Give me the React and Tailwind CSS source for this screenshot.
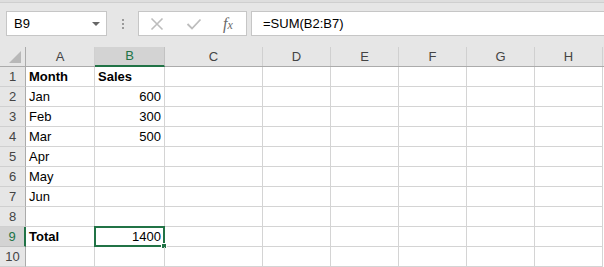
import React from 'react'

const cols = [
  { id: 'A', w: 'w-[69px]' },
  { id: 'B', w: 'w-[70px]' },
  { id: 'C', w: 'w-[98px]' },
  { id: 'D', w: 'w-[68px]' },
  { id: 'E', w: 'w-[68px]' },
  { id: 'F', w: 'w-[68px]' },
  { id: 'G', w: 'w-[68px]' },
  { id: 'H', w: 'w-[68px]' },
]

const rows = [
  ['Month', 'Sales', true],
  ['Jan', '600'],
  ['Feb', '300'],
  ['Mar', '500'],
  ['Apr', ''],
  ['May', ''],
  ['Jun', ''],
  ['', ''],
  ['Total', '1400', true],
  ['', ''],
]

function FormulaBar() {
  return (
    <div className="flex items-stretch h-[25px] mt-[8px]">
      <div className="ml-[6px] w-[101px] bg-white border border-[#c6c6c6] flex items-center justify-between pl-[7px] pr-[6px] text-[13px] text-black">
        <span>B9</span>
        <span className="w-0 h-0 border-l-[4px] border-r-[4px] border-t-[4px] border-l-transparent border-r-transparent border-t-[#666]" />
      </div>
      <div className="w-[31px] flex flex-col items-center justify-center gap-[2px]">
        <span className="w-[2px] h-[2px] bg-[#9a9a9a]" />
        <span className="w-[2px] h-[2px] bg-[#9a9a9a]" />
        <span className="w-[2px] h-[2px] bg-[#9a9a9a]" />
      </div>
      <div className="w-[109px] bg-white border border-[#c6c6c6] flex items-center">
        <svg width="14" height="14" viewBox="0 0 14 14" className="ml-[11px]">
          <path d="M1.5 1.5 L12.5 12.5 M12.5 1.5 L1.5 12.5" stroke="#bdbdbd" strokeWidth="1.6" fill="none" />
        </svg>
        <svg width="16" height="12" viewBox="0 0 16 12" className="ml-[22px]">
          <path d="M1.5 6 L6 10.5 L14.5 1.5" stroke="#bdbdbd" strokeWidth="1.8" fill="none" />
        </svg>
        <span className="ml-[21px] font-['Liberation_Serif',serif] italic text-[16px] text-[#6a6a6a] leading-none">
          f<span className="text-[12px]">x</span>
        </span>
      </div>
      <div className="ml-[4px] flex-1 bg-white border border-[#c6c6c6] border-r-0 flex items-center pl-[11px] text-[13px] text-black">
        =SUM(B2:B7)
      </div>
    </div>
  )
}

export default function App() {
  return (
    <div className="w-[604px] h-[267px] overflow-hidden bg-[#e6e6e6] font-['Liberation_Sans',Arial,sans-serif]">
      <div className="h-[3px] bg-[#dedede] border-b border-[#cfcfcf]" />
      <FormulaBar />
      <div className="mt-[11px]">
        <div className="flex h-[20px] border-b border-[#ababab]">
          <div className="w-[26px] border-r border-[#ababab] relative">
            <svg width="12" height="12" viewBox="0 0 12 12" className="absolute right-[4px] bottom-[3px]">
              <path d="M12 0 L12 12 L0 12 Z" fill="#b8b8b8" />
            </svg>
          </div>
          {cols.map((c) => (
            <div
              key={c.id}
              className={`${c.w} flex items-center justify-center text-[13px] border-r ${
                c.id === 'B'
                  ? 'bg-[#d3d3d3] text-[#217346] border-r-[#c2c2c2] border-b-2 border-b-[#217346] -mb-px'
                  : 'text-[#444] border-[#d0d0d0]'
              }`}
            >
              {c.id}
            </div>
          ))}
        </div>
        <div className="bg-white">
          {rows.map((r, i) => {
            const sel = i === 8
            return (
              <div key={i} className="flex h-[20px]">
                <div
                  className={`w-[26px] flex items-center justify-center text-[13px] border-b ${
                    sel
                      ? 'bg-[#d3d3d3] text-[#217346] border-b-[#c2c2c2] border-r-2 border-r-[#217346]'
                      : 'bg-[#e6e6e6] text-[#444] border-b-[#d0d0d0] border-r border-r-[#ababab]'
                  }`}
                >
                  {i + 1}
                </div>
                <div className={`w-[69px] flex items-center pl-[3px] text-[13px] text-black border-r border-b border-[#d4d4d4] ${r[2] ? 'font-bold' : ''}`}>
                  {r[0]}
                </div>
                <div
                  className={`w-[70px] relative flex items-center text-[13px] text-black border-r border-b border-[#d4d4d4] ${
                    i === 0 ? 'justify-start pl-[3px] font-bold' : 'justify-end pr-[3px]'
                  }`}
                >
                  {r[1]}
                  {sel && (
                    <>
                      <div className="absolute -left-[1px] -top-[1px] -right-[1px] -bottom-[1px] border-2 border-[#217346]" />
                      <div className="absolute -right-[3px] -bottom-[3px] w-[6px] h-[6px] bg-[#217346] border border-white" />
                    </>
                  )}
                </div>
                {cols.slice(2).map((c) => (
                  <div key={c.id} className={`${c.w} border-r border-b border-[#d4d4d4]`} />
                ))}
              </div>
            )
          })}
        </div>
      </div>
    </div>
  )
}
